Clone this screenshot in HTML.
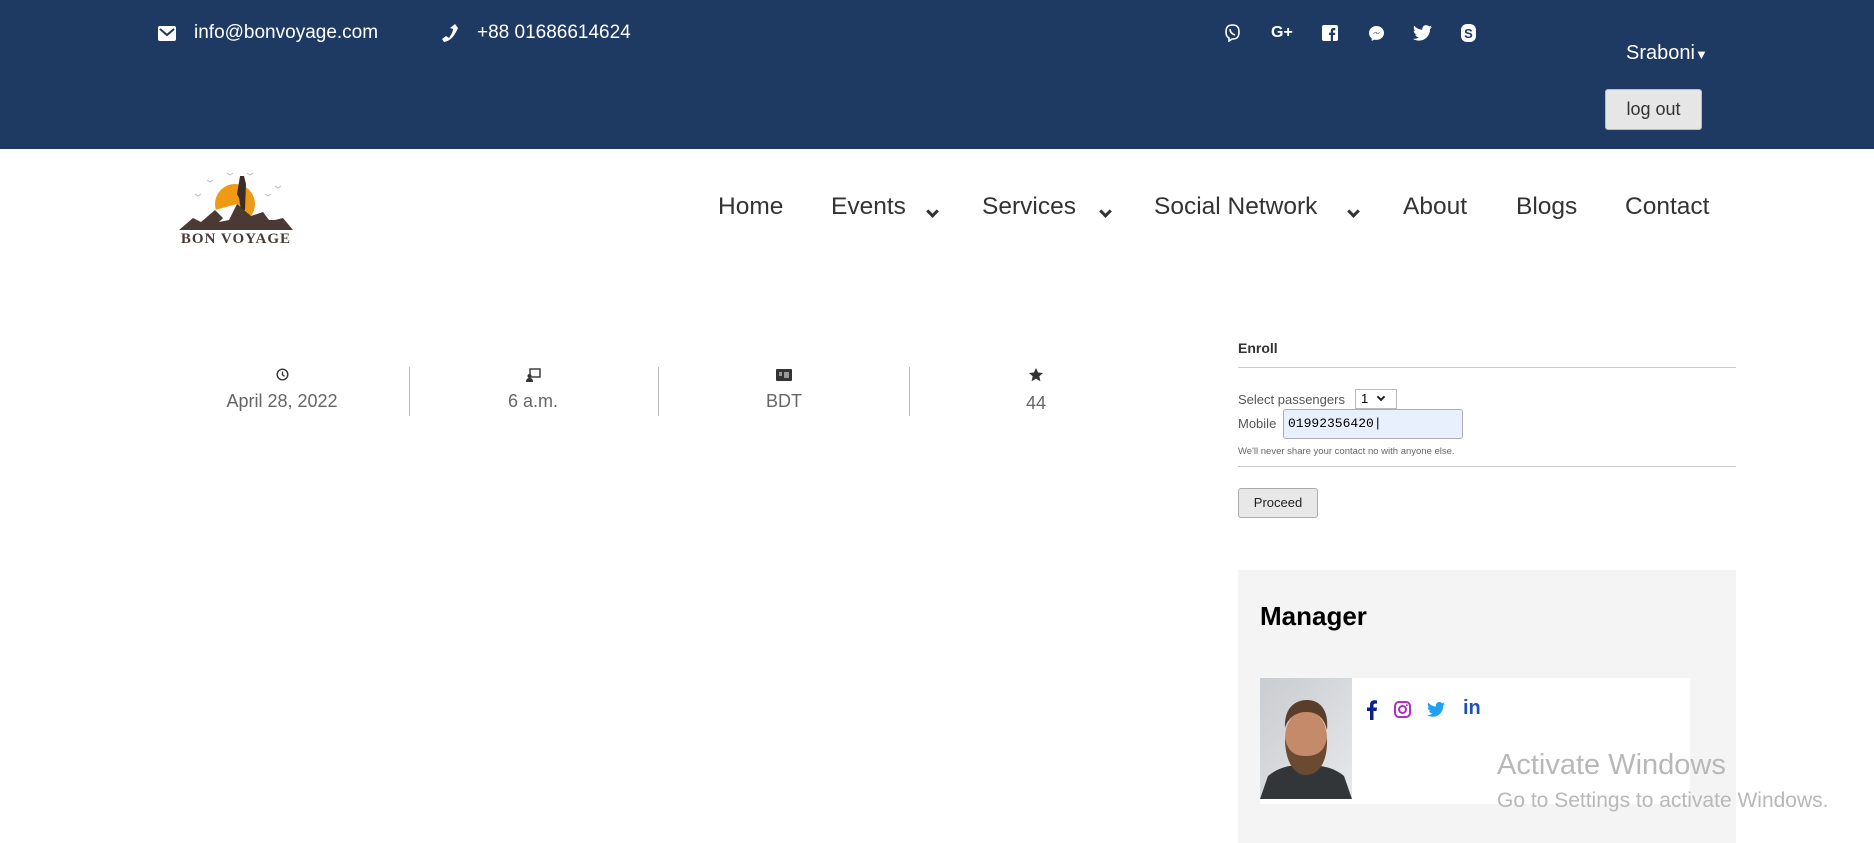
<!DOCTYPE html>
<html><head><meta charset="utf-8"><style>
*{margin:0;padding:0;box-sizing:border-box}
body{width:1874px;height:843px;overflow:hidden;background:#fff;font-family:"Liberation Sans",sans-serif;position:relative}
.a{position:absolute;white-space:nowrap}
.top{position:absolute;left:0;top:0;width:1874px;height:149px;background:#1e3a62}
.w{color:#fff}
.nav{font-size:24.5px;color:#333;top:193px}
.chev{position:absolute;top:207px;width:9px;height:9px;border-right:3px solid #333;border-bottom:3px solid #333;transform:rotate(45deg)}
.lbl{color:#666;font-size:18px;text-align:center;width:200px;top:391px}
.ic{top:368px;text-align:center;width:200px;font-size:14px;color:#333}
.div{width:1px;height:49px;background:#bbb;top:367px}
.hr{height:1px;background:#ccc;left:1238px;width:498px}
</style></head><body>
<div class="top"></div>
<svg class="a" style="left:158px;top:26px" width="18" height="15" viewBox="0 0 18 15"><rect x="0" y="0" width="18" height="15" rx="2" fill="#fff"/><path d="M2 3 L9 9 L16 3" stroke="#1e3a62" stroke-width="2" fill="none"/></svg>
<div class="a w" style="left:194px;top:22px;font-size:19px">info@bonvoyage.com</div>
<svg class="a" style="left:441px;top:23px" width="18" height="20" viewBox="0 0 18 20"><path d="M14 1 L17 5 C13 14 9 18 3 19 L1 16 L5 13 L8 15 C10 12 12 9 12 6 L9 5 Z" fill="#fff"/></svg>
<div class="a w" style="left:477px;top:22px;font-size:19px">+88 01686614624</div>
<svg class="a" style="left:1224px;top:24px" width="17" height="18" viewBox="0 0 17 18"><path d="M8.5 1C4 1 2 3 2 8c0 3 1 5 3 6v3l3-2h.5C13 15 15 13 15 8S13 1 8.5 1z" stroke="#fff" stroke-width="1.6" fill="none"/><path d="M6 5c0 3 2 5 5 6" stroke="#fff" stroke-width="1.6" fill="none"/></svg>
<div class="a w" style="left:1271px;top:24px;font-size:16px;font-weight:bold">G+</div>
<svg class="a" style="left:1322px;top:25px" width="16" height="16" viewBox="0 0 16 16"><rect width="16" height="16" rx="2" fill="#fff"/><path d="M11 16V10h2l.3-2.3H11V6.3c0-.7.2-1.1 1.1-1.1h1.2V3.1C13 3 12.3 3 11.6 3 9.9 3 8.8 4 8.8 5.9v1.8H7V10h1.8v6z" fill="#1e3a62"/></svg>
<svg class="a" style="left:1368px;top:25px" width="17" height="17" viewBox="0 0 17 17"><path d="M8.5 1C4.4 1 1 4 1 8c0 2.3 1 4 2.7 5.2V16l2.5-1.4c.7.2 1.5.3 2.3.3 4.1 0 7.5-3 7.5-7S12.6 1 8.5 1z" fill="#fff"/><path d="M4 10l3-3 2 2 4-3-3 3-2-2z" fill="#1e3a62"/></svg>
<svg class="a" style="left:1413px;top:25px" width="19" height="16" viewBox="0 0 24 20"><path d="M24 2.4c-.9.4-1.8.7-2.8.8 1-.6 1.8-1.6 2.2-2.7-1 .6-2 1-3.1 1.2C19.3.7 18 0 16.6 0c-2.7 0-4.9 2.2-4.9 4.9 0 .4 0 .8.1 1.1C7.7 5.8 4.1 3.9 1.7.9c-.4.7-.7 1.6-.7 2.5 0 1.7.9 3.2 2.2 4.1-.8 0-1.6-.2-2.2-.6v.1c0 2.4 1.7 4.4 3.9 4.8-.4.1-.8.2-1.3.2-.3 0-.6 0-.9-.1.6 2 2.4 3.4 4.6 3.4-1.7 1.3-3.8 2.1-6.1 2.1H0c2.2 1.4 4.8 2.2 7.5 2.2 9.1 0 14-7.5 14-14v-.6c1-.7 1.8-1.6 2.5-2.6z" fill="#fff"/></svg>
<svg class="a" style="left:1461px;top:24px" width="15" height="18" viewBox="0 0 15 18"><rect x="0" y="0" width="15" height="18" rx="6" fill="#fff"/><text x="7.5" y="14" font-size="13" font-weight="bold" text-anchor="middle" fill="#1e3a62" font-family="Liberation Sans">S</text></svg>
<div class="a w" style="left:1626px;top:42px;font-size:20px">Sraboni<span style="font-size:13px">▼</span></div>
<div class="a" style="left:1605px;top:89px;width:97px;height:41px;background:#e6e6e6;border:1px solid #bbb;border-radius:3px;font-size:18px;color:#333;text-align:center;line-height:39px">log out</div>
<!-- logo -->
<svg class="a" style="left:177px;top:170px" width="118" height="76" viewBox="0 0 118 76">
<path d="M30 10l3 2 3-2M50 3l3 2 3-2M70 3l3 2 3-2M18 24l3 2 3-2M88 24l3 2 3-2M98 16l3 2 3-2" stroke="#bbb" fill="none"/>
<circle cx="58" cy="34" r="20" fill="#ee9a14"/>
<path d="M63 6 l4 0 l2 8 l-1 26 l-4 0 l-2 -12 l-2 -4 z" fill="#3b2e28"/>
<path d="M2 60 L16 48 L24 52 L38 40 L48 44 L60 34 L74 46 L86 42 L98 50 L106 48 L116 60 Z" fill="#4a3a33"/>
<path d="M38 40 L46 48 L42 52 L52 50 L60 34 Z M86 42 L92 50 L98 50 Z" fill="#fff"/>
<text x="59" y="73" font-size="15" font-weight="bold" text-anchor="middle" fill="#4a3a33" font-family="Liberation Serif" letter-spacing="1">BON VOYAGE</text>
</svg>
<div class="a nav" style="left:718px">Home</div>
<div class="a nav" style="left:831px">Events</div><div class="chev" style="left:928px"></div>
<div class="a nav" style="left:982px">Services</div><div class="chev" style="left:1101px"></div>
<div class="a nav" style="left:1154px">Social Network</div><div class="chev" style="left:1349px"></div>
<div class="a nav" style="left:1403px">About</div>
<div class="a nav" style="left:1516px">Blogs</div>
<div class="a nav" style="left:1625px">Contact</div>
<div class="a ic" style="left:182px"><svg width="13" height="13" viewBox="0 0 13 13"><circle cx="6.5" cy="6.5" r="5.3" stroke="#333" stroke-width="1.4" fill="none"/><path d="M6.5 3.5v3.3l2 1.5" stroke="#333" stroke-width="1.3" fill="none"/></svg></div>
<div class="a lbl" style="left:182px">April 28, 2022</div>
<div class="a div" style="left:409px"></div>
<div class="a ic" style="left:433px"><svg width="15" height="14" viewBox="0 0 15 14"><rect x="4" y="1" width="10" height="8" stroke="#333" stroke-width="1.4" fill="none"/><circle cx="3.5" cy="8" r="2" fill="#333"/><path d="M0 14c0-3 1.5-4 3.5-4S7 11 7 14z" fill="#333"/></svg></div>
<div class="a lbl" style="left:433px">6 a.m.</div>
<div class="a div" style="left:658px"></div>
<div class="a ic" style="left:684px"><svg width="16" height="12" viewBox="0 0 16 12"><rect width="16" height="12" rx="1" fill="#333"/><path d="M3 4h3M3 6h3M8 4h5M8 6h5M8 8h5" stroke="#fff" stroke-width="1"/></svg></div>
<div class="a lbl" style="left:684px">BDT</div>
<div class="a div" style="left:909px"></div>
<div class="a ic" style="left:936px"><svg width="14" height="14" viewBox="0 0 14 14"><path d="M7 0l2.1 4.5 4.9.5-3.7 3.3 1.1 4.9L7 10.8 2.6 13.2l1.1-4.9L0 5l4.9-.5z" fill="#333"/></svg></div>
<div class="a lbl" style="left:936px;top:393px">44</div>
<div class="a" style="left:1238px;top:340px;font-size:14px;font-weight:bold;color:#333">Enroll</div>
<div class="a hr" style="top:367px"></div>
<div class="a" style="left:1238px;top:392px;font-size:13px;color:#555">Select passengers</div>
<div class="a" style="left:1355px;top:389px;width:42px;height:20px;border:1px solid #bbb;font-size:13px;padding-left:5px;line-height:18px;color:#000">1 <span style="display:inline-block;width:6px;height:6px;border-right:2px solid #222;border-bottom:2px solid #222;transform:rotate(45deg);margin:0 0 3px 6px"></span></div>
<div class="a" style="left:1238px;top:416px;font-size:13px;color:#555">Mobile</div>
<div class="a" style="left:1283px;top:409px;width:180px;height:30px;background:#e8f0fe;border:1px solid #aab;border-radius:3px;font-size:13px;padding-left:4px;line-height:28px;color:#000;font-family:'Liberation Mono',monospace">01992356420|</div>
<div class="a" style="left:1238px;top:446px;font-size:9.5px;color:#666">We'll never share your contact no with anyone else.</div>
<div class="a hr" style="top:466px"></div>
<div class="a" style="left:1238px;top:488px;width:80px;height:30px;background:#e8e8e8;border:1px solid #aaa;border-radius:3px;font-size:13px;text-align:center;line-height:28px;color:#222">Proceed</div>
<div class="a" style="left:1238px;top:570px;width:498px;height:273px;background:#f4f4f4"></div>
<div class="a" style="left:1260px;top:601px;font-size:26px;font-weight:bold;color:#000">Manager</div>
<div class="a" style="left:1260px;top:678px;width:430px;height:126px;background:#fff"></div>
<svg class="a" style="left:1260px;top:678px" width="92" height="121" viewBox="0 0 92 121"><defs><linearGradient id="g" x1="0" y1="0" x2="1" y2="1"><stop offset="0" stop-color="#c9ccd0"/><stop offset="1" stop-color="#e6e8ea"/></linearGradient></defs><rect width="92" height="121" fill="url(#g)"/><path d="M0 121 L8 98 C20 88 35 86 46 88 C60 86 75 90 84 98 L92 121Z" fill="#333638"/><ellipse cx="46" cy="60" rx="21" ry="28" fill="#c48a6a"/><path d="M25 60 C25 85 35 97 46 97 C58 97 68 85 67 60 C64 75 56 78 46 78 C36 78 28 75 25 60Z" fill="#6b4a32"/><path d="M25 50 C24 30 35 22 47 22 C60 22 69 32 67 52 C64 40 58 34 46 34 C36 34 28 40 25 50Z" fill="#5a3d2a"/></svg>
<svg class="a" style="left:1367px;top:700px" width="10" height="20" viewBox="0 0 10 20"><path d="M6.5 20V11h3l.5-3.5H6.5V5.3c0-1 .3-1.7 1.7-1.7H10V.5C9.7.4 8.6.3 7.4.3 4.8.3 3 1.9 3 4.8V7.5H0V11h3v9z" fill="#0d1f8c"/></svg>
<svg class="a" style="left:1394px;top:701px" width="17" height="17" viewBox="0 0 17 17"><rect x="1" y="1" width="15" height="15" rx="4" stroke="#b02cc4" stroke-width="2" fill="none"/><circle cx="8.5" cy="8.5" r="3.5" stroke="#b02cc4" stroke-width="2" fill="none"/><circle cx="12.8" cy="4.2" r="1" fill="#b02cc4"/></svg>
<svg class="a" style="left:1427px;top:702px" width="18" height="15" viewBox="0 0 24 20"><path d="M24 2.4c-.9.4-1.8.7-2.8.8 1-.6 1.8-1.6 2.2-2.7-1 .6-2 1-3.1 1.2C19.3.7 18 0 16.6 0c-2.7 0-4.9 2.2-4.9 4.9 0 .4 0 .8.1 1.1C7.7 5.8 4.1 3.9 1.7.9c-.4.7-.7 1.6-.7 2.5 0 1.7.9 3.2 2.2 4.1-.8 0-1.6-.2-2.2-.6v.1c0 2.4 1.7 4.4 3.9 4.8-.4.1-.8.2-1.3.2-.3 0-.6 0-.9-.1.6 2 2.4 3.4 4.6 3.4-1.7 1.3-3.8 2.1-6.1 2.1H0c2.2 1.4 4.8 2.2 7.5 2.2 9.1 0 14-7.5 14-14v-.6c1-.7 1.8-1.6 2.5-2.6z" fill="#1da1f2"/></svg>
<div class="a" style="left:1463px;top:697px;font-size:20px;font-weight:bold;color:#1f4fb8">in</div>
<div class="a" style="left:1497px;top:749px;font-size:29px;color:#b8b8b8">Activate Windows</div>
<div class="a" style="left:1497px;top:789px;font-size:21px;color:#b8b8b8">Go to Settings to activate Windows.</div>
</body></html>
